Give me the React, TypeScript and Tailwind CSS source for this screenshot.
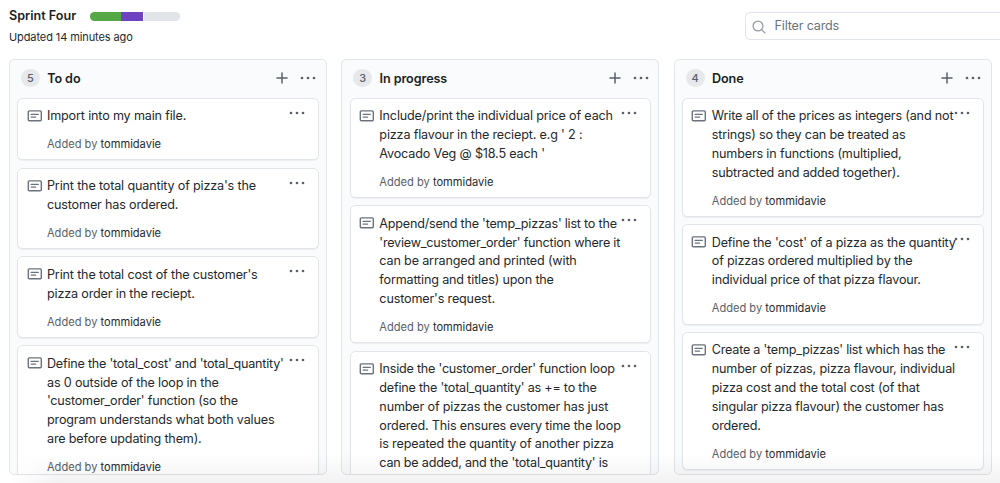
type Card = { lines: string[]; author?: string };
type Column = { count: number; title: string; cards: Card[] };

const author = 'tommidavie';

const columns: Column[] = [
  {
    count: 5,
    title: 'To do',
    cards: [
      { author, lines: ['Import into my main file.'] },
      { author, lines: ["Print the total quantity of pizza's the", 'customer has ordered.'] },
      { author, lines: ["Print the total cost of the customer's", 'pizza order in the reciept.'] },
      {
        author,
        lines: [
          "Define the 'total_cost' and 'total_quantity'",
          'as 0 outside of the loop in the',
          "'customer_order' function (so the",
          'program understands what both values',
          'are before updating them).',
        ],
      },
    ],
  },
  {
    count: 3,
    title: 'In progress',
    cards: [
      {
        author,
        lines: ['Include/print the individual price of each', "pizza flavour in the reciept. e.g ' 2 :", "Avocado Veg @ $18.5 each '"],
      },
      {
        author,
        lines: [
          "Append/send the 'temp_pizzas' list to the",
          "'review_customer_order' function where it",
          'can be arranged and printed (with',
          'formatting and titles) upon the',
          "customer's request.",
        ],
      },
      {
        lines: [
          "Inside the 'customer_order' function loop",
          "define the 'total_quantity' as += to the",
          'number of pizzas the customer has just',
          'ordered. This ensures every time the loop',
          'is repeated the quantity of another pizza',
          "can be added, and the 'total_quantity' is",
        ],
      },
    ],
  },
  {
    count: 4,
    title: 'Done',
    cards: [
      {
        author,
        lines: [
          'Write all of the prices as integers (and not',
          'strings) so they can be treated as',
          'numbers in functions (multiplied,',
          'subtracted and added together).',
        ],
      },
      {
        author,
        lines: ["Define the 'cost' of a pizza as the quantity", 'of pizzas ordered multiplied by the', 'individual price of that pizza flavour.'],
      },
      {
        author,
        lines: [
          "Create a 'temp_pizzas' list which has the",
          'number of pizzas, pizza flavour, individual',
          'pizza cost and the total cost (of that',
          'singular pizza flavour) the customer has',
          'ordered.',
        ],
      },
    ],
  },
];

function Dots({ className = '' }: { className?: string }) {
  return (
    <svg className={className} width="16" height="4" viewBox="0 0 16 4" fill="#586069">
      <circle cx="2" cy="2" r="1.35" />
      <circle cx="8" cy="2" r="1.35" />
      <circle cx="14" cy="2" r="1.35" />
    </svg>
  );
}

function Plus() {
  return (
    <svg width="12" height="12" viewBox="0 0 12 12" stroke="#586069" strokeWidth="1.5" strokeLinecap="round">
      <path d="M6 1v10M1 6h10" />
    </svg>
  );
}

function NoteIcon() {
  return (
    <svg className="mt-[11px] shrink-0" width="15" height="12" viewBox="0 0 15 12" fill="none" stroke="#6a737d" strokeWidth="1.4">
      <rect x="1.3" y="0.9" width="13" height="9.8" rx="1" />
      <path d="M4.1 4.4h7.2M4.1 7.1h4.6" strokeLinecap="round" strokeWidth="1.2" />
    </svg>
  );
}

function CardView({ card }: { card: Card }) {
  return (
    <article className="relative flex shrink-0 rounded-[5.4px] border border-[#e1e4e8] bg-white pl-[8.4px] shadow-[0_1px_1px_rgba(27,31,35,0.06)]">
      <NoteIcon />
      <div className="pl-[5.4px] pt-[8.4px] pb-[6.7px]">
        <p className="text-[12.6px] leading-[18.85px] text-[#24292e]">
          {card.lines.map((line) => (
            <span
              key={line}
              className={`block whitespace-nowrap ${line.includes('_') ? 'tracking-[-0.22px]' : 'tracking-[-0.16px]'}`}
            >
              {line}
            </span>
          ))}
        </p>
        {card.author && (
          <p className="mt-[10.2px] text-[11.1px] leading-[16.7px] text-[#586069]">
            Added by <span className="text-[#24292e]">{card.author}</span>
          </p>
        )}
      </div>
      <Dots className="absolute right-[13px] top-[12px]" />
    </article>
  );
}

function ColumnView({ column }: { column: Column }) {
  return (
    <section className="flex h-[416px] w-[318px] shrink-0 flex-col overflow-hidden rounded-[5.4px] border border-[#e1e4e8] bg-[#fafbfc] px-[7.2px]">
      <header className="flex h-[37.6px] shrink-0 items-center pl-[3.6px] pr-[2.6px] pb-[1px]">
        <span className="flex h-[18px] w-[19px] items-center justify-center rounded-full bg-[#e6e8eb] text-[11px] font-medium text-[#586069]">
          {column.count}
        </span>
        <h2 className="ml-[7.4px] flex-1 pt-[3px] text-[12.6px] font-semibold tracking-[-0.08px] text-[#1b1f23]">{column.title}</h2>
        <Plus />
        <Dots className="ml-[12px]" />
      </header>
      <div className="flex flex-col gap-[7.2px]">
        {column.cards.map((card) => (
          <CardView key={card.lines[0]} card={card} />
        ))}
      </div>
    </section>
  );
}

export default function App() {
  return (
    <div className="relative h-[483px] w-[1000px] overflow-hidden bg-white font-['Inter',sans-serif]">
      <div className="flex h-[59px] justify-between pl-[9px]">
        <div className="pt-[7px]">
          <div className="flex items-center">
            <h1 className="w-[67px] whitespace-nowrap text-[12.6px] font-semibold leading-[18px] text-[#1b1f23]">Sprint Four</h1>
            <div className="ml-[14px] flex h-[9px] w-[90px] overflow-hidden rounded-full bg-[#e1e4e8]">
              <div className="w-[31px] bg-[#55a845]" />
              <div className="w-[23px] border-r border-white bg-[#6f42c1]" />
            </div>
          </div>
          <p className="mt-[3px] text-[11px] leading-[18px] tracking-[-0.1px] text-[#24292e]">Updated 14 minutes ago</p>
        </div>
        <div className="mt-[12px] flex h-[28px] w-[255.4px] items-center rounded-l-[5.4px] border border-r-0 border-[#e1e4e8] pl-[6.4px] pt-px">
          <svg width="14" height="14" viewBox="0 0 14 14" fill="none" stroke="#959da5" strokeWidth="1.3" strokeLinecap="round">
            <circle cx="6" cy="6" r="4.9" />
            <path d="M9.6 9.6l3.3 3.3" />
          </svg>
          <span className="ml-[8.6px] text-[12.6px] tracking-[-0.18px] text-[#6a737d]">Filter cards</span>
        </div>
      </div>
      <main className="flex gap-[14.4px] pl-[9px]">
        {columns.map((column) => (
          <ColumnView key={column.title} column={column} />
        ))}
      </main>
      <div className="pointer-events-none absolute bottom-0 left-0 h-[30px] w-full bg-linear-to-b from-transparent to-black/5 [mask-image:linear-gradient(to_right,transparent_10px,black_60px)]" />
    </div>
  );
}
